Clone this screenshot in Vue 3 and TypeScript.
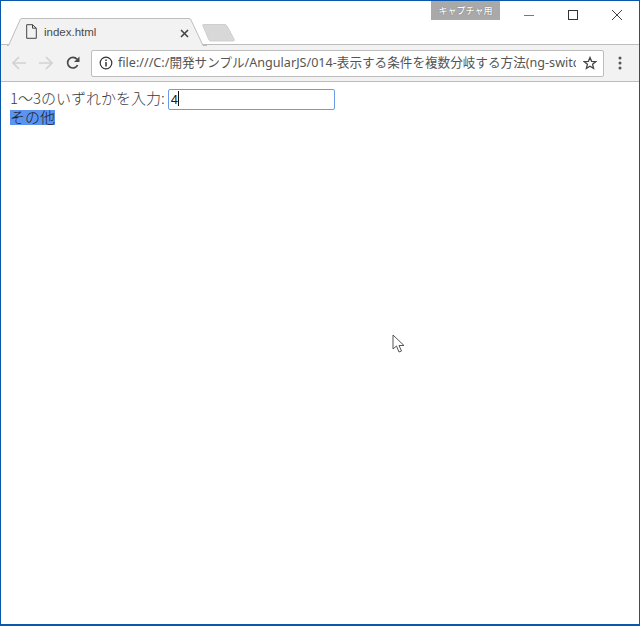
<script setup lang="ts">
const title = 'index.html'
const url = 'file:///C:/開発サンプル/AngularJS/014-表示する条件を複数分岐する方法(ng-switch)'
</script>

<template>
  <div class="window">
    <header class="titlebar">
      <div class="tabs">
        <div class="tab">
          <svg class="tab-shape" width="200" height="28" viewBox="0 0 200 28">
            <path d="M0 27.5 H1.5 L13 2 Q13.5 .5 15 .5 H182 Q183.5 .5 184 2 L196 27.5 H200" fill="#f2f2f2" stroke="#bdbdbd" />
          </svg>
          <svg class="file-icon" width="11" height="15" viewBox="0 0 11 15">
            <path d="M.7 .7 H6.500 L10.300 4.200 V14.300 H.7 Z M6.500 .7 V4.200 H10.300" fill="none" stroke="#444" stroke-width="1" />
          </svg>
          <span class="tab-title">{{ title }}</span>
          <svg class="tab-close" width="9" height="9" viewBox="0 0 9 9">
            <path d="M1 1 L8 8 M8 1 L1 8" stroke="#444" stroke-width="1.6" />
          </svg>
        </div>
        <svg class="new-tab" width="34" height="18" viewBox="0 0 34 18">
          <path d="M2 2 Q1 .5 3 .5 H24 Q25 .5 26 2 L33 15 Q34 17 32 17 H10 Q8.500 17 8 16 Z" fill="#d8d8d8" stroke="#cfcfcf" />
        </svg>
      </div>
      <div class="capture">キャプチャ用</div>
      <div class="controls">
        <svg width="10" height="10" viewBox="0 0 10 10"><path d="M0 5.500 H10" stroke="#777" /></svg>
        <svg width="10" height="10" viewBox="0 0 10 10"><rect x=".5" y=".5" width="9" height="9" fill="none" stroke="#333" /></svg>
        <svg width="10" height="10" viewBox="0 0 10 10"><path d="M0 0 L10 10 M10 0 L0 10" stroke="#444" /></svg>
      </div>
    </header>

    <nav class="toolbar">
      <svg class="nav" width="14" height="14" viewBox="0 0 14 14">
        <path d="M14 7 H1.500 M7 1 L1 7 L7 13" fill="none" stroke="#d2d2d2" stroke-width="1.700" />
      </svg>
      <svg class="nav" width="14" height="14" viewBox="0 0 14 14">
        <path d="M0 7 H12.500 M7 1 L13 7 L7 13" fill="none" stroke="#d2d2d2" stroke-width="1.700" />
      </svg>
      <svg class="nav reload" width="14" height="14" viewBox="0 0 14 14">
        <path d="M11.600 9.200 A5.300 5.300 0 1 1 11 3.300" fill="none" stroke="#484848" stroke-width="1.700" />
        <path d="M13.500 .5 V6 H8 Z" fill="#484848" />
      </svg>
      <div class="address">
        <svg class="info" width="14" height="14" viewBox="0 0 14 14">
          <circle cx="7" cy="7" r="5.800" fill="none" stroke="#333" stroke-width="1.200" />
          <path d="M7 6 V10.500 M7 3.500 V5" stroke="#333" stroke-width="1.500" />
        </svg>
        <span class="url">{{ url }}</span>
        <svg class="star" width="14" height="14" viewBox="0 0 14 14">
          <path d="M7 1.500 L8.600 5.300 L12.800 5.600 L9.600 8.300 L10.600 12.400 L7 10.200 L3.400 12.400 L4.400 8.300 L1.200 5.600 L5.400 5.300 Z" fill="none" stroke="#444" stroke-width="1.300" />
        </svg>
      </div>
      <svg class="menu" width="4" height="14" viewBox="0 0 4 14">
        <circle cx="2" cy="2" r="1.500" fill="#555" />
        <circle cx="2" cy="7" r="1.500" fill="#555" />
        <circle cx="2" cy="12" r="1.500" fill="#555" />
      </svg>
    </nav>

    <main class="page">
      <div class="row first">
        <label class="label" for="value">1〜3のいずれかを入力:</label>
        <div id="value" class="field">4<span class="caret"></span></div>
      </div>
      <div class="row"><span class="selected">その他</span></div>

      <svg class="cursor" width="13" height="20" viewBox="0 0 13 20">
        <path d="M1 1 V15 L4.500 12 L7 18 L9.500 17 L7 11.500 L12 11.500 Z" fill="#fff" stroke="#555" stroke-width="1" />
      </svg>
    </main>
  </div>
</template>

<style scoped>
.window {
  position: relative;
  box-sizing: border-box;
  width: 640px;
  height: 626px;
  display: flex;
  flex-direction: column;
  border: 1px solid #0b57ab;
  border-width: 1px 1px 2px 1px;
  background: #fff;
  overflow: hidden;
  font-family: "Noto Sans CJK JP", "Liberation Sans", sans-serif;
}
.titlebar {
  position: relative;
  height: 44px;
  flex: none;
  display: flex;
  align-items: flex-start;
  box-shadow: inset 0 -1px 0 #bdbdbd;
}
.tabs {
  display: flex;
  align-items: flex-start;
  padding: 17px 0 0 6px;
}
.tab {
  position: relative;
  width: 196px;
  height: 27px;
  display: flex;
  align-items: center;
  padding-left: 19px;
  box-sizing: border-box;
}
.tab-shape {
  position: absolute;
  left: 0;
  top: 0;
}
.file-icon {
  position: relative;
  margin-top: -1px;
}
.tab-title {
  position: relative;
  margin-left: 7px;
  font-family: "Liberation Sans", sans-serif;
  font-size: 11.500px;
  color: #4a4a4a;
}
.tab-close {
  position: absolute;
  left: 173px;
  top: 11px;
}
.new-tab {
  margin: 6px 0 0 -2px;
}
.capture {
  position: absolute;
  left: 430px;
  top: 0;
  width: 69px;
  height: 19px;
  background: #a9a9a9;
  color: #fff;
  font-size: 9px;
  font-weight: 500;
  line-height: 19px;
  text-align: center;
  white-space: nowrap;
  text-shadow: 0 0 1px #555;
}
.controls {
  position: absolute;
  left: 523px;
  top: 9px;
  display: flex;
  gap: 34px;
}
.toolbar {
  height: 37px;
  flex: none;
  box-sizing: border-box;
  display: flex;
  align-items: center;
  background: #f2f2f2;
  border-bottom: 1px solid #bdbdbd;
  padding-left: 11px;
}
.nav {
  margin-right: 13px;
}
.reload {
  margin-right: 11px;
}
.address {
  width: 513px;
  height: 27px;
  box-sizing: border-box;
  display: flex;
  align-items: center;
  background: #fff;
  border: 1px solid #bdbdbd;
  border-radius: 2px;
  padding: 0 6px 0 7px;
}
.info {
  flex: none;
}
.url {
  flex: 1;
  min-width: 0;
  margin-left: 5px;
  overflow: hidden;
  white-space: nowrap;
  font-family: "Noto Sans", "Noto Sans CJK JP", sans-serif;
  font-size: 12.600px;
  color: #555;
  line-height: 26px;
}
.star {
  flex: none;
  margin-left: 7px;
}
.menu {
  margin-left: 14px;
}
.page {
  position: relative;
  flex: 1;
  padding: 7px 8px 8px 9px;
  font-size: 15px;
  font-weight: 300;
  color: #3a3a3a;
}
.row {
  display: flex;
  align-items: center;
}
.first {
  height: 21px;
}
.label {
  white-space: nowrap;
  line-height: 18px;
  margin-bottom: 3px;
}
.field {
  position: relative;
  box-sizing: border-box;
  width: 167px;
  height: 21px;
  margin-left: 3px;
  border: 1px solid #6a9be8;
  border-radius: 2px;
  padding-left: 2px;
  font-family: "Liberation Sans", sans-serif;
  font-size: 13px;
  line-height: 19px;
  color: #222;
  background: #fff;
}
.caret {
  display: inline-block;
  width: 1px;
  height: 15px;
  background: #111;
  vertical-align: -2px;
}
.selected {
  background: #5a94f0;
  color: #1d1d2a;
  line-height: 13px;
  height: 15px;
  display: block;
}
.cursor {
  position: absolute;
  left: 391px;
  top: 252px;
}
</style>
